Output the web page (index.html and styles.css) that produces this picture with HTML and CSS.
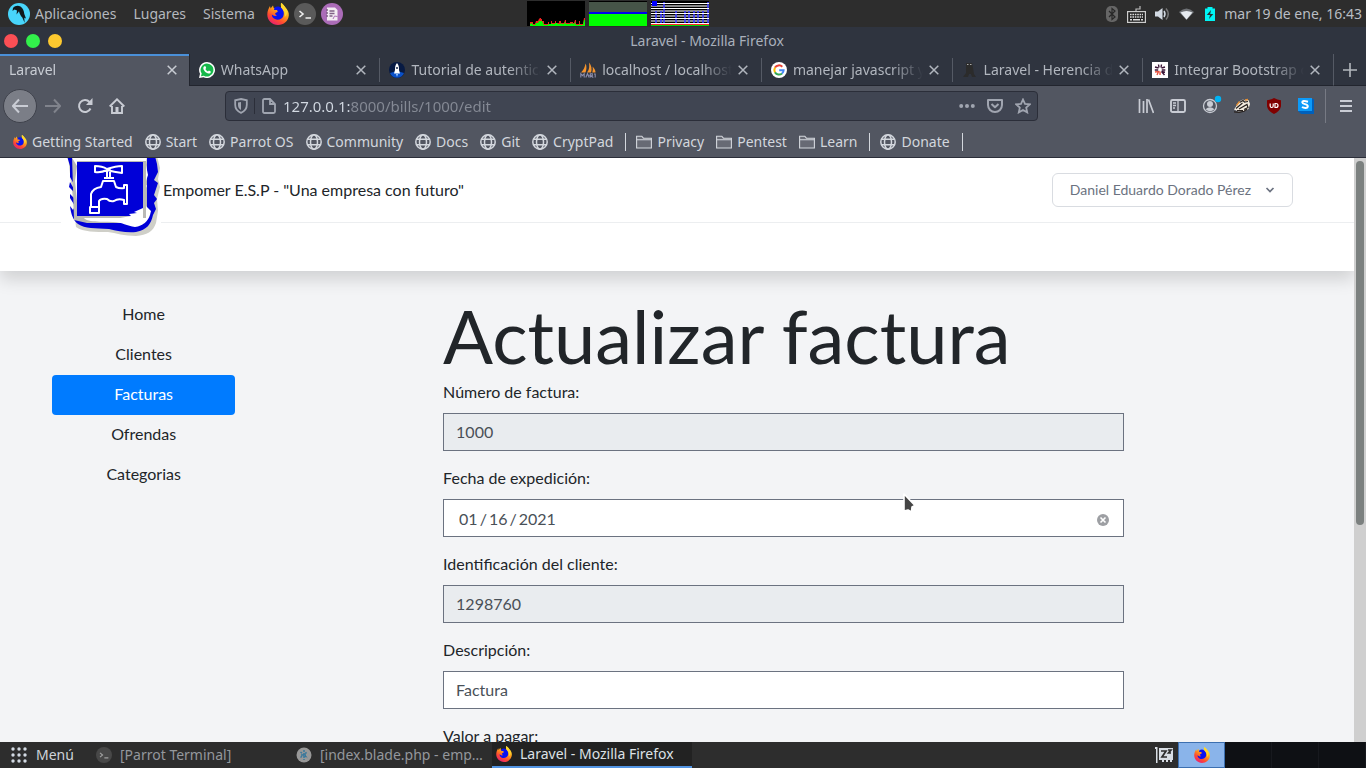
FILE: index.html
```html
<!DOCTYPE html>
<html lang="es">
<head>
<meta charset="utf-8">
<title>Laravel - Mozilla Firefox</title>
<link rel="stylesheet" href="styles.css">
</head>
<body>
<svg class="defs" width="0" height="0" aria-hidden="true">
  <defs>
    <linearGradient id="fxg" x1="0.8" y1="0" x2="0.2" y2="1"><stop offset="0" stop-color="#fff44f"/><stop offset=".4" stop-color="#ffa318"/><stop offset=".7" stop-color="#ff4a31"/><stop offset="1" stop-color="#e4187c"/></linearGradient>
    <symbol id="firefox" viewBox="0 0 22 22">
      <path fill="url(#fxg)" d="M14 0c2 1 3.300 2.700 4 4.500 3 2 4 5 3.800 8C21.300 18 16.800 22 11 22S.3 17.500.3 11.500C.3 8 1.500 5.500 3 3l.6 2.500L6 2.500 6.700 5l4.600 1.200L14 5z"/>
      <path fill="#0a12f0" d="M7.500 4.500c2-1.500 5-1.500 7 .5 2.300 2.300 3 5.500 1.800 8.200-1.300 3-5.300 4.300-8.300 2.800-2-1-3.200-2.500-3.200-4.500 1.500 1.500 3.600 2 5.200.8-1.500-.2-2-1-1.800-2l2.600-1.600L10 7 7 7z"/>
      <path fill="#ffd62c" d="M14 0c-.8 3 .6 5 2.300 7 1.500 1.800 2 4 1.300 7 3-2 3.500-6 1-9.500C17.500 2.700 15.700 1 14 0z"/>
    </symbol>
    <symbol id="globe" viewBox="0 0 16 16"><g fill="none" stroke="currentColor" stroke-width="1.500"><circle cx="8" cy="8" r="7.200"/><ellipse cx="8" cy="8" rx="3.500" ry="7.200"/><path d="M1.500 5.300h13M1.500 10.700h13"/></g></symbol>
    <symbol id="folder" viewBox="0 0 16 16"><path d="M.6 14V2.200h5.200l1.600 2h8V14z M.6 5.800h14.800" fill="#676a74" stroke="currentColor" stroke-width="1.100"/></symbol>
    <symbol id="close" viewBox="0 0 10 10"><path d="M.7.7l8.600 8.600M9.300.7L.7 9.300" stroke="currentColor" stroke-width="1.500" fill="none"/></symbol>
    <symbol id="terminal" viewBox="0 0 22 22"><circle cx="11" cy="11" r="11" fill="#5a5a5a"/><path d="M5.500 8l3.500 3-3.500 3M11.500 15h5.500" stroke="#eee" stroke-width="1.600" fill="none"/></symbol>
  </defs>
</svg>

<header class="panel">
  <svg class="i22" viewBox="0 0 22 22"><circle cx="11" cy="11" r="11" fill="#48d5fb"/><path fill="#10181c" d="M5 5C7 2.500 10 2 12.500 3.500c2.500 1.700 3.500 4.500 3.800 7.500l1.700 4.500-1.700-.8.300 5-2.300-5.200c-1.700-1.800-2.800-4-3.300-6.300L8.500 11.500 9 7.500 6.500 6.600 4.500 8z"/></svg>
  <nav class="menus"><button>Aplicaciones</button><button>Lugares</button><button>Sistema</button></nav>
  <div class="launchers">
    <svg class="i22"><use href="#firefox"/></svg>
    <svg class="i22"><use href="#terminal"/></svg>
    <svg class="i22" viewBox="0 0 22 22"><circle cx="11" cy="11" r="11" fill="#ab6cb8"/><path fill="#f3ecf3" d="M6 4.500h8l2.500 2.500v10.500H6z"/><path d="M8.500 8h5M8.500 10.500h5M8.500 13h3M5 7h2M5 10h2M5 13h2" stroke="#806087" stroke-width="1.300"/><path d="M12 16l1.500-3 3 .5" stroke="#ab6cb8" fill="none"/></svg>
  </div>
  <div class="graphs">
    <svg viewBox="0 0 58 25"><path fill="#000" d="M0 0h58v25H0z"/><path fill="#f02020" d="M3 25V21H6V23H8L9 20H11L12 18L13 17H14V18H15V20H17V23H21V21H22V23H24V20H25V22H28V20H29V22H32V20H34V22H37L38 19H39V22H43V21H46V22H47L48 19H49V23H52V20H53V23H56L57 17H58V25z"/><path fill="#0f0" d="M3 25V23L5 22L6 24H8L9 22H11L12 20H15L16 22L17 24H21V23H24V22L25 23H28V22H30L31 23H33L34 22L35 23H37L38 21L39 23H43L45 22L46 23H47L48 21L49 24H52V22L53 24H56L57 19H58V25z"/></svg>
    <svg viewBox="0 0 58 25"><path fill="#465448" d="M0 0h58v25H0z"/><path fill="#000" d="M0 0h58v1H0z"/><path fill="#0000f0" d="M0 11h58v2H0z"/><path fill="#0f0" d="M0 13h58v12H0z"/></svg>
    <svg viewBox="0 0 58 25" shape-rendering="crispEdges"><path fill="#000" d="M0 0h58v25H0z"/><path stroke="#8b8b8b" stroke-width="2" d="M0 5h58M0 10h58M0 15h58M0 20h58"/><path stroke="#3a3aff" stroke-opacity=".8" stroke-width="2" d="M13 1v22M5 10v13M10 10v13M25 10v13M34 10v13M38 10v13M43 10v13M47 10v13M52 10v13M57 1v22"/><path stroke="#fff" d="M0 2.500h58M0 7.500h58M0 12.500h58M0 17.500h58M0 22.500h58"/><path fill="#00f" d="M1 0h5v5H1z"/><path stroke="#f22" d="M0 23.500h58"/><path stroke="#0d0" d="M0 24.500h58"/></svg>
  </div>
  <div class="tray">
    <svg width="12" height="16" viewBox="0 0 12 16"><rect width="12" height="16" rx="5" fill="#666"/><path d="M3 5l6 6-3 2.500v-11L9 5l-6 6" fill="none" stroke="#282828" stroke-width="1.200"/></svg>
    <svg width="19" height="18" viewBox="0 0 19 18"><path d="M9 7V4h4V1" fill="none" stroke="#bbb" stroke-width="1.200"/><rect x=".6" y="6.600" width="17.800" height="10.800" fill="#222" stroke="#ccc" stroke-width="1.200"/><path d="M3 9.500h13M3 12h13" stroke="#ddd" stroke-width="1.600" stroke-dasharray="1.600 .8"/><path d="M3 14.700h2M6 14.700h7M14 14.700h2" stroke="#ddd" stroke-width="1.500"/></svg>
    <svg width="15" height="14" viewBox="0 0 15 14"><path d="M0 4.500h3L7.500 1v12L3 9.500H0z" fill="#d3dae3"/><path d="M9 4q2 3 0 6" stroke="#d3dae3" stroke-width="1.500" fill="none"/><path d="M11 1.500q4.500 5.500 0 11" stroke="#777" stroke-width="1.500" fill="none"/></svg>
    <svg width="15" height="12" viewBox="0 0 15 12"><path d="M0 4q7.500-7 15 0l-7.500 8z" fill="#6f7276"/><path d="M1.500 4.500q6-3 12 0l-6 7z" fill="#e6ebf0"/></svg>
    <svg class="battery" width="10" height="14" viewBox="0 0 10 14"><path d="M2.500 0h5v1.500H10V14H0V1.500h2.500z" fill="#00f4f4"/><path d="M6 3L1.800 8H5l-1 4 4.300-5H5.200z" fill="#233"/></svg>
    <time>mar 19 de ene, 16:43</time>
  </div>
</header>

<main class="window">
  <div class="titlebar">
    <div class="lights"><button class="red" aria-label="Cerrar"></button><button class="green" aria-label="Maximizar"></button><button class="amber" aria-label="Minimizar"></button></div>
    <div class="wtitle">Laravel - Mozilla Firefox</div>
  </div>

  <div class="tabs">
    <div class="tab active"><span class="label">Laravel</span><button aria-label="Cerrar pestaña"><svg><use href="#close"/></svg></button></div>
    <div class="tab"><svg class="i16" viewBox="0 0 16 16"><path fill="#fff" d="M8 0a8 8 0 1 1-3.500 15.200L0 16l1-4.200A8 8 0 0 1 8 0z"/><path fill="#15b84a" d="M8 1.500a6.500 6.500 0 1 1-3.200 12.200L2 14.300l.7-2.700A6.500 6.500 0 0 1 8 1.500z"/><path fill="#fff" d="M5.300 4.200l1.200.1.700 1.800-.8 1c.6 1.200 1.400 1.900 2.600 2.400l.9-1 1.900.9c.1 1.500-1 2.200-2.200 2.200C6.800 11 4.300 8.300 4.300 6c0-.8.400-1.500 1-1.800z"/></svg><span class="label">WhatsApp</span><button aria-label="Cerrar pestaña"><svg><use href="#close"/></svg></button></div>
    <div class="tab"><svg class="i16" viewBox="0 0 16 16"><circle cx="8" cy="8" r="8" fill="#071a43"/><path d="M1 11a7.500 7.500 0 0 0 14 0l-7-2z" fill="#0a50c8"/><path d="M8 1c2 2 2 5 2 7l1 3.500H5L6 8c0-2 0-5 2-7z" fill="#fff"/><circle cx="8" cy="6" r="1" fill="#124"/><path d="M7 12h2l-1 3z" fill="#9cf"/></svg><span class="label">Tutorial de autenticación</span><button aria-label="Cerrar pestaña"><svg><use href="#close"/></svg></button></div>
    <div class="tab"><svg class="i16" viewBox="0 0 16 16"><path fill="#f6942c" d="M1 10.500C3.500 8 5 5 5.500 1.500 7 4 6.500 8 5.500 10.500zM7 10.500C9.500 7.500 9.500 4 9 .5c2.500 2.500 3.200 7 2 10zM12.200 10.500c.8-2 .8-4 .3-6 2 1.800 3 4 3 6z"/><path d="M.8 15.500v-3.800l1.700 2 1.700-2v3.800M5.800 15.500l1.700-3.800 1.700 3.800M10.300 15.500v-3.800h2v2h-2l3 1.800M14 12h1.200v3.500" fill="none" stroke="#8c8cab" stroke-width="1.100"/></svg><span class="label">localhost / localhost / empo</span><button aria-label="Cerrar pestaña"><svg><use href="#close"/></svg></button></div>
    <div class="tab"><svg class="i16" viewBox="0 0 16 16"><circle cx="8" cy="8" r="8" fill="#fff"/><g fill="none" stroke-width="2"><path stroke="#ea4335" d="M4 5.600A4.700 4.700 0 0 1 11.300 4.700"/><path stroke="#fbbc05" d="M4 5.600a5 5 0 0 0 0 4.800"/><path stroke="#34a853" d="M4 10.400a4.700 4.700 0 0 0 7 1.100"/><path stroke="#4285f4" d="M11 11.500a4.500 4.500 0 0 0 1.600-3.300H8.200"/></g></svg><span class="label">manejar javascript y laravel</span><button aria-label="Cerrar pestaña"><svg><use href="#close"/></svg></button></div>
    <div class="tab"><svg class="i16" viewBox="0 0 16 16"><path fill="#2b2b2b" d="M4 1h6l1 5 1 6 2 3h-4l-1-3H7l-1 3H1l3-4z"/><path stroke="#aaa" d="M5 2.500h1.500M8 2.500h1.500"/></svg><span class="label">Laravel - Herencia de plantillas</span><button aria-label="Cerrar pestaña"><svg><use href="#close"/></svg></button></div>
    <div class="tab"><svg class="i16" viewBox="0 0 16 16"><path fill="#fff" d="M0 0h16v16H0z"/><path d="M6.500 2.500l.5 3M9.500 2.500l-.5 3M3 5l3.500 1M13 5L9.500 6M2.800 8h3.400M9.800 8h3.500M9.500 9.500l3 3.500M9.500 9.500l3.500.8" stroke="#3b1436" stroke-width="1.400"/><path d="M3 10l3.500-.5-1.500 3.500M8 9.500V13" fill="none" stroke="#e7523e" stroke-width="1.400"/></svg><span class="label">Integrar Bootstrap con Laravel</span><button aria-label="Cerrar pestaña"><svg><use href="#close"/></svg></button></div>
    <button class="newtab" aria-label="Nueva pestaña"><svg width="14" height="14" viewBox="0 0 14 14"><path d="M7 0v14M0 7h14" stroke="currentColor" stroke-width="1.600"/></svg></button>
  </div>

  <div class="toolbar">
    <div class="navbtns">
      <button class="back" aria-label="Atrás"><svg class="i16" viewBox="0 0 16 16"><path d="M16 8H1M7 1.500L.9 8 7 14.500" fill="none" stroke="currentColor" stroke-width="2"/></svg></button>
      <button class="dim" aria-label="Adelante"><svg class="i16" viewBox="0 0 16 16"><path d="M0 8h15M9 1.500L15.100 8 9 14.500" fill="none" stroke="currentColor" stroke-width="2"/></svg></button>
      <button aria-label="Recargar"><svg class="i16" viewBox="0 0 16 16"><path d="M13.500 10.500A6 6 0 1 1 12.500 4" fill="none" stroke="currentColor" stroke-width="2"/><path d="M15.500 0v7H9z" fill="currentColor"/></svg></button>
      <button aria-label="Inicio"><svg class="i16" viewBox="0 0 16 16"><path d="M.7 8.500L8 1.300l7.300 7.200M3 8v7h10V8" fill="none" stroke="currentColor" stroke-width="1.900"/><path d="M6.500 9h3v6h-3z" fill="currentColor"/></svg></button>
    </div>
    <div class="urlbar">
      <svg class="shield" width="14" height="16" viewBox="0 0 14 16"><path d="M7 1l5.800 1.300v4.500c0 4-2.500 6.700-5.800 8-3.300-1.300-5.800-4-5.800-8V2.300z" fill="none" stroke="currentColor" stroke-width="1.800"/><path d="M7 4v8c-2-1-3-3-3-5V4.600z" fill="currentColor"/></svg>
      <svg class="doc" width="14" height="16" viewBox="0 0 14 16"><path d="M1 2.500Q1 1 2.500 1H8l5 5v7.500q0 1.500-1.500 1.500h-9Q1 15 1 13.500zM8 1v5h5" fill="none" stroke="currentColor" stroke-width="1.800"/></svg>
      <input class="url" type="text" aria-label="Dirección" value="127.0.0.1:8000/bills/1000/edit">
      <svg class="i16" viewBox="0 0 16 16"><circle cx="2.200" cy="8" r="2"/><circle cx="8" cy="8" r="2"/><circle cx="13.800" cy="8" r="2"/></svg>
      <svg class="i16" viewBox="0 0 16 16"><path d="M1 2h14v5a7 7 0 0 1-14 0zM4.500 6L8 9.300 11.500 6" fill="none" stroke="currentColor" stroke-width="2" stroke-linejoin="round"/></svg>
      <svg class="i16" viewBox="0 0 16 16"><path d="M8 1.500l2 4.400 4.800.5-3.600 3.200 1 4.800L8 12l-4.200 2.400 1-4.800L1.200 6.400 6 5.900z" fill="none" stroke="currentColor" stroke-width="1.800"/></svg>
    </div>
    <div class="tools">
      <svg class="i16" viewBox="0 0 16 16"><path d="M1.500 1v14M5.500 3v12M9 1v14M10.500 1.500l5 13.500" stroke="currentColor" stroke-width="1.700"/></svg>
      <svg class="i16" viewBox="0 0 16 16"><rect x="1" y="2" width="14" height="12" rx="1.500" fill="none" stroke="currentColor" stroke-width="1.900"/><path d="M8 2v12M3 5h3M3 7.500h3M3 10h2" stroke="currentColor" stroke-width="1.300"/></svg>
      <svg class="account" width="20" height="20" viewBox="0 0 20 20"><circle cx="8" cy="11" r="6.500" fill="none" stroke="currentColor" stroke-width="1.300"/><circle cx="8" cy="9" r="3" fill="currentColor"/><path d="M3.500 14.200q4.500-4 9 0-4.500 4-9 0z" fill="currentColor"/><circle cx="16" cy="4" r="3.200" fill="#00b3f4"/></svg>
      <svg class="i16" viewBox="0 0 16 16"><path d="M0 11.500L3 7l3-4 3-1.500 2 1 3.500-.5 1.500 4-1.500 5-4 2-6 .5z" fill="#f4ecdf"/><path d="M5.500 4.500L9 2.500l1.500 1.500 3.500-.5M2 10.500L8.500 5M5 11l8-4.500 1 3-4 2M0 13.800l5 .5 5-1 3-2M3 12.500h6" stroke="#28221f" stroke-width="1.200" fill="none"/><path d="M2.500 7.500l3-4M11 2l3-.5" stroke="#e89034" stroke-width="1.300"/></svg>
      <svg class="i16" viewBox="0 0 16 16"><path d="M8 0q3.500 2 7 2.200v6Q14 13 8 16 2 13 1 8.200v-6Q4.500 2 8 0z" fill="#800000"/><path d="M4.200 5.500V8q0 1.500 1.500 1.500T7.200 8V5.500M9 9.500v-4h1q2 0 2 2t-2 2z" fill="none" stroke="#fff" stroke-width="1.200"/></svg>
      <svg class="i16" viewBox="0 0 16 16"><path d="M2 1h14v15H3L0 13z" fill="#0060bb"/><path d="M0 0h14v13H0z" fill="#0c9af8"/><path d="M10 3.700Q4 2 4.300 4.500C4.500 6.500 10 5.800 9.800 8.300 9.700 10.500 6 10.300 4 9" fill="none" stroke="#fff" stroke-width="2"/></svg>
    </div>
    <button class="burger" aria-label="Menú"><svg width="12" height="12" viewBox="0 0 12 12"><path d="M0 1h12M0 6h12M0 11h12" stroke="currentColor" stroke-width="2"/></svg></button>
  </div>

  <nav class="bookmarks">
    <a href="#"><svg class="fx"><use href="#firefox"/></svg>Getting Started</a>
    <a href="#"><svg><use href="#globe"/></svg>Start</a>
    <a href="#"><svg><use href="#globe"/></svg>Parrot OS</a>
    <a href="#"><svg><use href="#globe"/></svg>Community</a>
    <a href="#"><svg><use href="#globe"/></svg>Docs</a>
    <a href="#"><svg><use href="#globe"/></svg>Git</a>
    <a href="#"><svg><use href="#globe"/></svg>CryptPad</a>
    <i></i>
    <a href="#"><svg><use href="#folder"/></svg>Privacy</a>
    <a href="#"><svg><use href="#folder"/></svg>Pentest</a>
    <a href="#"><svg><use href="#folder"/></svg>Learn</a>
    <i></i>
    <a href="#"><svg><use href="#globe"/></svg>Donate</a>
    <i></i>
  </nav>

  <div class="viewport">
    <div class="page">
      <div class="site-head">
        <div class="brandbar">
          <div class="container brandrow">
            <a class="brand" href="#">
              <svg class="logo" viewBox="-1 4 100 100"><path fill="#fff" d="M-1 0h102v98H-1z"/>
                <path fill="#cfcfc8" d="M6 20h89l3 12-2 11 2 8-3 12 1 12-2 12c-3 9-9 12-20 13-12 0-20-3-28-4-12 0-25 0-32-5z"/>
                <path fill="#0000d8" d="M5 20h88l2 8 1 8-4 8 4 3-4 12 3 4-3 4 2 6-3 6c-2 9-6 15-17 17-9 1-19-1-27-3-14-1-24 0-31-5-5-4-7-10-8-18l3 4 2-4-5-8v-4l5 5-1-7-5-5 1-5 4 7 1-3-5-9V30z"/>
                <path fill="#b9b9b5" d="M10 20h75v57l-5 12-14-2H25L12 84z"/>
                <path fill="#fff" d="M9 20l76-1-1 10 2 10-4 12 3-2-4 12 3 4-1 4 6 6-1 4c-2 6-7 11-15 12-8-1-13-5-22-5-11-1-21 1-28-3-5-4-7-12-8-18l-2-20 2-15z"/>
                <path fill="#b9b9b5" d="M15 25h69v57H17z"/><path fill="#0000d8" d="M15 26h66v54H15z"/>
                <path fill="#fff" d="M81 72l-9 4 3 1-8 1 2 2-11 2-4 3 27-2z"/>
                <g fill="none" stroke="#fff" stroke-width="2" stroke-linejoin="round"><path d="M33 30q7 0 12 3 9-3 15-3v7q-8-1-15-3-6 3-12 2zM45 34h3v8h-3zM42 42h10M41 45h11l2 6q4 2 8 1v-3h3v19h-3v-4q-6-2-10 1-4 1-7-2-6-1-8 2v6h-8V58q2-6 10-7zM28 71h9v6h-9z"/></g></svg>
              <span>Empomer E.S.P - "Una empresa con futuro"</span>
            </a>
            <button class="user">Daniel Eduardo Dorado Pérez<svg width="10" height="10" viewBox="0 0 10 10"><path d="M1.500 3L5 6.500 8.500 3" fill="none" stroke="currentColor" stroke-width="1.700"/></svg></button>
          </div>
        </div>
        <div class="subbar"></div>
      </div>
      <div class="container columns">
        <nav class="side"><a href="#">Home</a><a href="#">Clientes</a><a href="#" class="on">Facturas</a><a href="#">Ofrendas</a><a href="#">Categorias</a></nav>
        <div class="content">
          <form class="bill">
            <h1>Actualizar factura</h1>
            <label for="num">Número de factura:</label>
            <input id="num" type="text" value="1000" disabled>
            <label for="date">Fecha de expedición:</label>
            <div class="datebox"><input id="date" type="date" value="2021-01-16"><button type="button" aria-label="Borrar"><svg width="12" height="12" viewBox="0 0 12 12"><circle cx="6" cy="6" r="6" fill="#9d9fa3"/><path d="M3.500 3.500l5 5M8.500 3.500l-5 5" stroke="#fff" stroke-width="1.600"/></svg></button>
            <svg class="cursor" width="16" height="24" viewBox="0 0 16 24"><path d="M2 2l11 11.500-3 1.500-.5 5-3.500-2-4 1z" fill="#454545" stroke="#fff" stroke-width="1.600" stroke-linejoin="round"/></svg></div>
            <label for="cli">Identificación del cliente:</label>
            <input id="cli" type="text" value="1298760" disabled>
            <label for="desc">Descripción:</label>
            <input id="desc" type="text" value="Factura">
            <label for="val">Valor a pagar:</label>
            <input id="val" type="text">
          </form>
        </div>
      </div>
    </div>
    <div class="scroll"><div class="thumb"></div></div>
  </div>
</main>

<footer class="taskbar">
  <button class="start"><svg class="i16" viewBox="0 0 16 16" fill="#d3dae3"><g id="dots"><circle cx="2" cy="2" r="1.700"/><circle cx="8" cy="2" r="1.700"/><circle cx="14" cy="2" r="1.700"/></g><use href="#dots" y="6"/><use href="#dots" y="12"/></svg>Menú</button>
  <button class="task"><svg class="i16 faded"><use href="#terminal"/></svg><span>[Parrot Terminal]</span></button>
  <button class="task"><svg class="i16" viewBox="0 0 16 16"><circle cx="8" cy="8" r="7.500" fill="#989898"/><path d="M8 3v10M4.500 5l7 6M4.500 10.500L11 5M5 8h6" stroke="#39789c" stroke-width="1.500" stroke-dasharray="2 1"/></svg><span>[index.blade.php - empomer</span></button>
  <button class="task current"><svg class="i16"><use href="#firefox"/></svg><span>Laravel - Mozilla Firefox</span></button>
  <svg class="zz" width="18" height="16" viewBox="0 0 18 16"><path d="M0 0h2.500v16H1V2H0zM4 1h14v12h-1v2h-2v-2h-2v2h-2v-2H9v2H7v-2H4z" fill="#d8dde4"/><path d="M6 4h5l-4 6h5M13 3h3l-2.500 3H16" fill="none" stroke="#2c2c2c" stroke-width="1.700"/></svg>
  <div class="spaces"><button class="sel" aria-label="Espacio 1"><svg class="i16"><use href="#firefox"/></svg></button><button aria-label="Espacio 2"></button><button aria-label="Espacio 3"></button><button aria-label="Espacio 4"></button></div>
</footer>
</body>
</html>
```
FILE: styles.css
```css
* { box-sizing: border-box; }
html, body { height: 100%; }
body { margin: 0; display: flex; flex-direction: column; overflow: hidden; background: #2d2d2d; font: 14px/20px "Noto Sans", sans-serif; color: #b4b8be; }
button { font: inherit; color: inherit; background: none; border: 0; padding: 0; margin: 0; display: flex; align-items: center; }
a { color: inherit; text-decoration: none; }
svg { flex: none; display: block; }
.defs { position: absolute; }
.i16 { width: 16px; height: 16px; }
.i22 { width: 22px; height: 22px; }

/* Desktop panel */
.panel { height: 27px; flex: none; display: flex; align-items: center; padding: 0 4px 0 8px; }
.menus { display: flex; gap: 17px; margin-left: 5px; }
.launchers { display: flex; gap: 5px; margin-left: 12px; }
.graphs { display: flex; gap: 4px; margin-left: 184px; }
.graphs svg { width: 58px; height: 25px; }
.tray { display: flex; align-items: center; gap: 9px; margin-left: auto; color: #b9bdc3; }
.battery { margin-left: 2px; }

/* Window frame */
.window { flex: 1; min-height: 0; display: flex; flex-direction: column; background: #525661; }
.titlebar { height: 27px; flex: none; display: flex; align-items: center; background: #2f343f; color: #a9b0bb; }
.lights { display: flex; gap: 8px; padding-left: 4px; }
.lights button { width: 14px; height: 14px; border-radius: 50%; }
.red { background: #fb4f55; }
.green { background: #32f04b; }
.amber { background: #fdc92f; }
.wtitle { flex: 1; text-align: center; padding-right: 14px; }

.tabs { height: 32px; flex: none; display: flex; background: #2f343f; }
.tab { flex: 1 1 0; min-width: 0; display: flex; align-items: center; padding: 0 12px 0 9px; gap: 6px; border-bottom: 1px solid #22252e; position: relative; color: #b1b6be; }
.tab + .tab { padding: 0 13px 0 10px; }
.tab + .tab::before { content: ""; position: absolute; left: 0; top: 4px; height: 24px; width: 1px; background: #555a65; }
.tab.active + .tab::before { top: 0; height: 100%; background: #22252e; }
.tab.active { background: #525661; border-top: 2px solid #4a90d9; border-bottom: 0; padding-bottom: 2px; color: #c8ccd3; }
.label { flex: 1; overflow: hidden; white-space: nowrap; -webkit-mask-image: linear-gradient(to left, transparent, #000 32px); mask-image: linear-gradient(to left, transparent, #000 32px); }
.tab button svg { width: 10px; height: 10px; }
.newtab { width: 33px; flex: none; justify-content: center; border-bottom: 1px solid #22252e; border-left: 1px solid #555a65; }

.toolbar { height: 40px; flex: none; display: flex; align-items: center; color: #c9ccd4; }
.navbtns { display: flex; align-items: center; width: 225px; padding-left: 3px; gap: 0; }
.navbtns button { width: 32px; height: 32px; justify-content: center; }
.navbtns .back { width: 34px; height: 34px; background: #7b7e87; border: 1px solid #3f424c; border-radius: 50%; }
.navbtns .dim { color: #80838c; }
.urlbar { flex: 1; min-width: 0; max-width: 813px; height: 30px; display: flex; align-items: center; gap: 12px; padding: 0 6px 0 8px; background: #404552; border: 1px solid #2b2e39; border-radius: 4px; color: #a0a5b0; fill: currentColor; }
.shield { margin-right: -6px; }
.doc { margin-right: -5px; box-sizing: content-box; padding-left: 7px; border-left: 1px solid #2b2e39; }
.url { flex: 1; min-width: 0; border: 0; outline: 0; padding: 0; font: inherit; font-size: 15px; color: transparent; background: linear-gradient(90deg, #d3dae3 67px, #858a95 67px); -webkit-background-clip: text; background-clip: text; }
.tools { display: flex; align-items: center; gap: 16px; margin-left: auto; padding-right: 11px; }
.account { margin: -2px -4px 0 0; }
.burger { width: 41px; height: 34px; justify-content: center; border-left: 1px solid #777a84; }

.bookmarks { height: 32px; flex: none; display: flex; align-items: center; gap: 12px; padding-left: 13px; border-bottom: 1px solid #2b2e39; color: #d3d7dd; }
.bookmarks a { display: flex; align-items: center; gap: 5px; white-space: nowrap; }
.bookmarks svg { width: 16px; height: 16px; }
.bookmarks .fx { width: 14px; height: 14px; }
.bookmarks i { width: 1px; height: 18px; background: #d3d7dd; margin-right: -2px; }

/* Laravel page */
.viewport { flex: 1; min-height: 0; display: flex; overflow: hidden; background: #f3f4f6; }
.page { flex: 1; min-width: 0; height: 100%; overflow: hidden; font: 16px/24px Lato, sans-serif; color: #212529; }
.container { max-width: 1280px; margin: 0 auto; }
.site-head { background: #fff; box-shadow: 0 8px 16px rgba(0, 0, 0, .15); }
.brandbar { border-bottom: 1px solid #eceef0; }
.brandrow { height: 64px; padding: 0 24px; display: flex; align-items: center; justify-content: space-between; }
.brand { display: flex; align-items: center; gap: 2px; height: 64px; }
.logo { width: 100px; height: 100px; }
.subbar { height: 48px; }
.user { height: 34px; padding: 0 17px; gap: 14px; border: 1px solid #d9dce1; border-radius: 6px; font-size: 14px; color: #6b7280; }
.columns { display: grid; grid-template-columns: 1fr 5fr; }
.side { padding: 24px 15px; display: flex; flex-direction: column; text-align: center; }
.side a { padding: 7px 16px 9px; border-radius: 4px; }
.side .on { background: #007bff; color: #fff; }
.content { display: grid; grid-template-columns: 1fr 4fr 1fr; }
.bill { grid-column: 2; padding: 16px 15px; display: flex; flex-direction: column; }
.bill h1 { margin: 0 0 8px; padding-top: 12px; font-size: 74px; line-height: 74px; font-weight: 400; white-space: nowrap; }
.bill label { line-height: 22px; margin-bottom: 10px; }
.bill input { width: 100%; height: 38px; margin: 0 0 16px; padding: 5px 12px 7px; border: 1px solid #6b7280; border-radius: 0; background: #fff; color: #495057; font: inherit; }
.bill input:disabled { background: #e9ecef; }
.datebox { position: relative; }
.datebox input { display: block; padding: 7px 15px 5px; }
.datebox button { position: absolute; right: 15px; top: 15px; }
.cursor { position: absolute; left: 459px; top: -7px; }
input::-webkit-calendar-picker-indicator { display: none; }
input::-webkit-datetime-edit-text { padding: 0 2px; }
input::-webkit-datetime-edit-month-field, input::-webkit-datetime-edit-day-field, input::-webkit-datetime-edit-year-field { padding: 0; }
.scroll { width: 12px; flex: none; background: #cfcfcf; padding: 3px 2px; }
.thumb { height: 63%; border-radius: 4px; background: #7b807f; }

/* Task bar */
.taskbar { height: 26px; flex: none; display: flex; align-items: center; }
.start { width: 92px; padding-left: 11px; gap: 9px; color: #cfd3d9; }
.task { width: 200px; height: 26px; padding: 0 4px; gap: 8px; color: #94979c; }
.task span { overflow: hidden; text-overflow: ellipsis; white-space: nowrap; }
.task.current { background: #222; color: #dde1e6; border-bottom: 2px solid #5294e2; }
.faded { opacity: .6; }
.zz { margin-left: auto; margin-right: 5px; }
.spaces { display: flex; height: 26px; background: #0e1014; }
.spaces button { width: 47px; justify-content: center; border-right: 1px solid #17191e; }
.spaces .sel { background: #8ab4ea; border: 1px solid #b7d1f2; outline: 1px solid #3c6fb0; outline-offset: -1px; }
```
